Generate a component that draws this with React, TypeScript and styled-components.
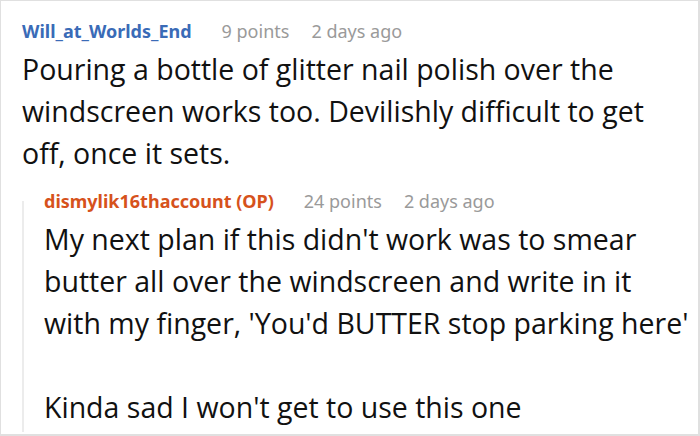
import React from 'react';
import styled, { createGlobalStyle } from 'styled-components';

const GlobalStyle = createGlobalStyle`
  html, body {
    margin: 0;
    padding: 0;
    background: #ffffff;
  }
  body {
    font-family: "Noto Sans", "Open Sans", "DejaVu Sans", sans-serif;
  }
`;

interface CommentData {
  author: string;
  isOp?: boolean;
  points: number;
  time: string;
  paragraphs: string[][];
}

const parent: CommentData = {
  author: 'Will_at_Worlds_End',
  points: 9,
  time: '2 days ago',
  paragraphs: [[
    'Pouring a bottle of glitter nail polish over the',
    'windscreen works too. Devilishly difficult to get',
    'off, once it sets.',
  ]],
};

const reply: CommentData = {
  author: 'dismylik16thaccount',
  isOp: true,
  points: 24,
  time: '2 days ago',
  paragraphs: [
    [
      "My next plan if this didn't work was to smear",
      'butter all over the windscreen and write in it',
      "with my finger, 'You'd BUTTER stop parking here'",
    ],
    ["Kinda sad I won't get to use this one"],
  ],
};

const Comment: React.FC<{ data: CommentData }> = ({ data }) => (
  <>
    <Tagline>
      <Author $op={data.isOp}>
        {data.author}
        {data.isOp ? ' (OP)' : ''}
      </Author>
      <Meta>{data.points} points</Meta>
      <Meta>{data.time}</Meta>
    </Tagline>
    {data.paragraphs.map((lines, i) => (
      <Body key={i}>
        {lines.map((line, j) => (
          <React.Fragment key={j}>
            {line}
            {j < lines.length - 1 && <br />}
          </React.Fragment>
        ))}
      </Body>
    ))}
  </>
);

export default function App() {
  return (
    <>
      <GlobalStyle />
      <Frame>
        <Comment data={parent} />
        <Child>
          <Comment data={reply} />
        </Child>
      </Frame>
    </>
  );
}

const Frame = styled.div`
  width: 700px;
  height: 436px;
  box-sizing: border-box;
  border: 1px solid #e0e0e0;
  border-right-width: 2px;
  border-bottom-width: 2px;
  padding: 18px 0 0 21px;
  overflow: hidden;
  background: #fff;
`;

const Tagline = styled.div`
  display: flex;
  align-items: baseline;
  height: 24px;
  line-height: 24px;
  white-space: nowrap;
`;

const Author = styled.span<{ $op?: boolean }>`
  font-size: 18px;
  font-weight: 700;
  color: ${(p) => (p.$op ? '#d6521c' : '#3a6bb7')};
  margin-right: 30px;
`;

const Meta = styled.span`
  font-size: 18px;
  color: #9a9a9a;
  margin-right: 22px;
`;

const Body = styled.p`
  margin: 5px 0 0;
  font-family: "Open Sans", "Noto Sans", sans-serif;
  font-size: 28.5px;
  line-height: 42px;
  color: #111;
  white-space: nowrap;

  & + & {
    margin-top: 42px;
  }
`;

const Child = styled.div`
  position: relative;
  margin-top: 15px;
  padding-left: 22px;

  &::before {
    content: '';
    position: absolute;
    left: 0;
    top: 12px;
    bottom: -4px;
    width: 2px;
    background: #ececec;
  }
`;
